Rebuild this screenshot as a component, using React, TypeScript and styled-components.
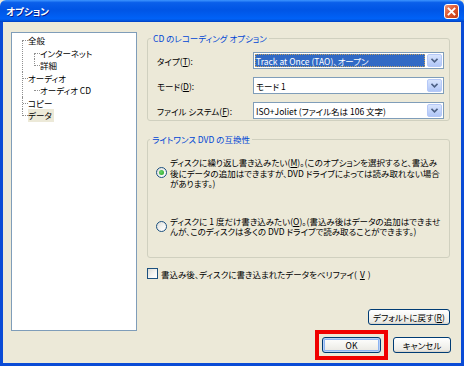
import React from 'react';
import styled, { createGlobalStyle } from 'styled-components';

const GlobalStyle = createGlobalStyle`
    html, body {
        margin: 0;
        padding: 0;
        background: #ECE9D8;
    }
    body {
        font-family: "Noto Sans CJK JP", "Noto Sans", sans-serif;
        font-size: 8.5px;
        color: #000;
        font-feature-settings: "palt";
    }
    u {
        text-decoration-thickness: 1px;
        text-underline-offset: 1px;
    }
`

const Window = styled.div`
    width: 464px;
    height: 366px;
    display: flex;
    flex-direction: column;
    overflow: hidden;
`

const TitleBar = styled.div`
    height: 22px;
    flex: none;
    display: flex;
    align-items: center;
    justify-content: space-between;
    padding: 0 5px 0 6px;
    background: linear-gradient(to bottom, #3D95FF 0%, #0A5FEA 12%, #0055E5 45%, #0062F7 85%, #0053DD 94%, #003DC0 100%);
    border-radius: 6px 6px 0 0;
    box-sizing: border-box;
`

const Title = styled.span`
    color: #fff;
    font-weight: bold;
    font-size: 9.5px;
    text-shadow: 1px 1px 0 #0A1E8C;
`

const CloseButton = styled.div`
    width: 15px;
    height: 15px;
    box-sizing: border-box;
    border: 1px solid #fff;
    border-radius: 3px;
    background: linear-gradient(135deg, #F09479 0%, #DE5A33 45%, #C23A12 100%);
    display: flex;
    align-items: center;
    justify-content: center;
`

const Body = styled.div`
    flex: 1;
    display: flex;
    flex-direction: column;
    gap: 6px;
    padding: 10px 11px 10px 8px;
    border: 3px solid #0A4BD6;
    border-top: none;
    background: #ECE9D8;
`

const Main = styled.div`
    flex: 1;
    display: flex;
    gap: 10px;
`

const TreeBox = styled.div`
    width: 126px;
    flex: none;
    box-sizing: border-box;
    border: 1px solid #7F9DB9;
    background: #fff;
    padding: 1px 0 0 10px;
`

const Node = styled.div`
    position: relative;
    padding-left: 6px;

    &::before {
        content: '';
        position: absolute;
        left: 0;
        top: 0;
        bottom: 0;
        border-left: 1px dotted #909090;
    }
    &:first-child::before {
        top: 6px;
    }
    &:last-child::before {
        bottom: auto;
        height: 7px;
    }
    &:first-child:last-child::before {
        height: 1px;
    }
    &::after {
        content: '';
        position: absolute;
        left: 1px;
        top: 6px;
        width: 5px;
        border-top: 1px dotted #909090;
    }
`

const Children = styled.div`
    margin-left: 6px;
`

const NodeLabel = styled.div<{ $selected?: boolean }>`
    height: 12.5px;
    line-height: 12.5px;
    display: inline-block;
    padding: 0 2px 0 0;
    white-space: nowrap;
    background: ${props => props.$selected ? "#ECE9D8" : "transparent"};
`

const Column = styled.div`
    flex: 1;
    display: flex;
    flex-direction: column;
`

const Group = styled.fieldset<{ $top: number }>`
    margin: ${props => props.$top}px 0 0 0;
    border: 1px solid #D0D0BF;
    border-radius: 3px;
    min-width: 0;
`

const Legend = styled.legend`
    color: #0046D5;
    padding: 0 2px;
    margin-left: -6px;
    line-height: 10px;
    white-space: nowrap;
`

const ComboGroup = styled(Group)`
    padding: 9px 5px 1px 9px;
    display: grid;
    grid-template-columns: 96px 1fr;
    row-gap: 8px;
    align-items: center;
`

const FieldLabel = styled.span`
    white-space: nowrap;
`

const Combo = styled.div`
    height: 17px;
    box-sizing: border-box;
    border: 1px solid #7F9DB9;
    background: #fff;
    display: flex;
    align-items: stretch;
    padding: 1px;
`

const ComboValue = styled.div<{ $selected?: boolean }>`
    flex: 1;
    display: flex;
    align-items: center;
    padding-left: 1px;
    margin-right: 2px;
    white-space: nowrap;
    color: ${props => props.$selected ? "#fff" : "#000"};
    background: ${props => props.$selected ? "#316AC5" : "transparent"};
    outline: ${props => props.$selected ? "1px dotted #C0A060" : "none"};
    outline-offset: -1px;
`

const DropButton = styled.div`
    width: 15px;
    flex: none;
    box-sizing: border-box;
    border: 1px solid #B5C8F7;
    border-radius: 2px;
    background: linear-gradient(to bottom, #D8E4FC 0%, #C4D5FB 50%, #B0C6F6 100%);
    display: flex;
    align-items: center;
    justify-content: center;
`

const RadioGroup = styled(Group)`
    padding: 13px 6px 20px 8px;
    display: flex;
    flex-direction: column;
    gap: 27px;
`

const OptionRow = styled.div`
    display: flex;
    align-items: center;
    gap: 3px;
`

const OptionText = styled.div`
    line-height: 10.5px;
    white-space: nowrap;
`

const Radio = styled.div<{ $checked?: boolean }>`
    width: 11px;
    height: 11px;
    flex: none;
    box-sizing: border-box;
    border-radius: 50%;
    border: 1px solid #1C5180;
    background: linear-gradient(135deg, #DCDCD6 0%, #F6F6F4 60%, #fff 100%);
    display: flex;
    align-items: center;
    justify-content: center;

    &::after {
        content: '';
        width: 5px;
        height: 5px;
        border-radius: 50%;
        background: ${props => props.$checked ? "radial-gradient(circle at 40% 40%, #6BD46B, #21A121)" : "transparent"};
    }
`

const CheckRow = styled.label`
    display: flex;
    align-items: center;
    gap: 3px;
    margin-top: 10px;
    white-space: nowrap;
`

const CheckBox = styled.div`
    width: 11px;
    height: 11px;
    flex: none;
    box-sizing: border-box;
    border: 1px solid #1C5180;
    background: linear-gradient(135deg, #DCDCD6 0%, #F6F6F4 60%, #fff 100%);
`

const DefaultRow = styled.div`
    margin-top: auto;
    margin-bottom: 6px;
    display: flex;
    justify-content: flex-end;
`

const Footer = styled.div`
    display: flex;
    justify-content: flex-end;
    gap: 12px;
    margin-right: -1px;
`

const Highlight = styled.div`
    margin: -7px;
    padding: 3px;
    border: 4px solid #F00000;
    display: flex;
`

const Button = styled.div<{ $width: number; $focused?: boolean }>`
    width: ${props => props.$width}px;
    height: 16px;
    box-sizing: border-box;
    border: 1px solid #003C74;
    border-radius: 3px;
    background: linear-gradient(to bottom, #FFFFFF 0%, #F4F4F0 50%, #ECEBE6 85%, #D6D0C5 100%);
    box-shadow: ${props => props.$focused ? "inset 0 0 0 1px #B9D1F6, inset 0 0 0 2px #8CB4F2" : "none"};
    display: flex;
    align-items: center;
    justify-content: center;
    white-space: nowrap;
`

function Arrow() {
    return (
        <svg width="7" height="5" viewBox="0 0 7 5">
            <path d="M0.5 0.8 L3.5 3.8 L6.5 0.8" fill="none" stroke="#4D6185" strokeWidth="1.6" />
        </svg>
    );
}

function CloseIcon() {
    return (
        <svg width="9" height="9" viewBox="0 0 9 9">
            <path d="M1.5 1.5 L7.5 7.5 M7.5 1.5 L1.5 7.5" stroke="#fff" strokeWidth="1.8" strokeLinecap="square" />
        </svg>
    );
}

function App() {
    return (
        <>
            <GlobalStyle />
            <Window>
                <TitleBar>
                    <Title>オプション</Title>
                    <CloseButton><CloseIcon /></CloseButton>
                </TitleBar>
                <Body>
                    <Main>
                        <TreeBox>
                            <Node>
                                <NodeLabel>全般</NodeLabel>
                                <Children>
                                    <Node><NodeLabel>インターネット</NodeLabel></Node>
                                    <Node><NodeLabel>詳細</NodeLabel></Node>
                                </Children>
                            </Node>
                            <Node>
                                <NodeLabel>オーディオ</NodeLabel>
                                <Children>
                                    <Node><NodeLabel>オーディオ CD</NodeLabel></Node>
                                </Children>
                            </Node>
                            <Node><NodeLabel>コピー</NodeLabel></Node>
                            <Node><NodeLabel $selected>データ</NodeLabel></Node>
                        </TreeBox>
                        <Column>
                            <ComboGroup $top={1}>
                                <Legend>CD のレコーディング オプション</Legend>
                                <FieldLabel>タイプ(<u>T</u>):</FieldLabel>
                                <Combo>
                                    <ComboValue $selected>Track at Once (TAO)、オープン</ComboValue>
                                    <DropButton><Arrow /></DropButton>
                                </Combo>
                                <FieldLabel>モード(<u>D</u>):</FieldLabel>
                                <Combo>
                                    <ComboValue>モード 1</ComboValue>
                                    <DropButton><Arrow /></DropButton>
                                </Combo>
                                <FieldLabel>ファイル システム(<u>F</u>):</FieldLabel>
                                <Combo>
                                    <ComboValue>ISO+Joliet (ファイル名は 106 文字)</ComboValue>
                                    <DropButton><Arrow /></DropButton>
                                </Combo>
                            </ComboGroup>
                            <RadioGroup $top={13}>
                                <Legend>ライトワンス DVD の互換性</Legend>
                                <OptionRow>
                                    <Radio $checked />
                                    <OptionText>
                                        ディスクに繰り返し書き込みたい(<u>M</u>)。(このオプションを選択すると、書込み<br />
                                        後にデータの追加はできますが、DVD ドライブによっては読み取れない場合<br />
                                        があります。)
                                    </OptionText>
                                </OptionRow>
                                <OptionRow>
                                    <Radio />
                                    <OptionText>
                                        ディスクに 1 度だけ書き込みたい(<u>O</u>)。(書込み後はデータの追加はできませ<br />
                                        んが、このディスクは多くの DVD ドライブで読み取ることができます。)
                                    </OptionText>
                                </OptionRow>
                            </RadioGroup>
                            <CheckRow>
                                <CheckBox />
                                書込み後、ディスクに書き込まれたデータをベリファイ(<u>V</u>)
                            </CheckRow>
                            <DefaultRow>
                                <Button $width={82}>デフォルトに戻す(<u>R</u>)</Button>
                            </DefaultRow>
                        </Column>
                    </Main>
                    <Footer>
                        <Highlight>
                            <Button $width={59} $focused>OK</Button>
                        </Highlight>
                        <Button $width={58}>キャンセル</Button>
                    </Footer>
                </Body>
            </Window>
        </>
    );
}

export default App;
